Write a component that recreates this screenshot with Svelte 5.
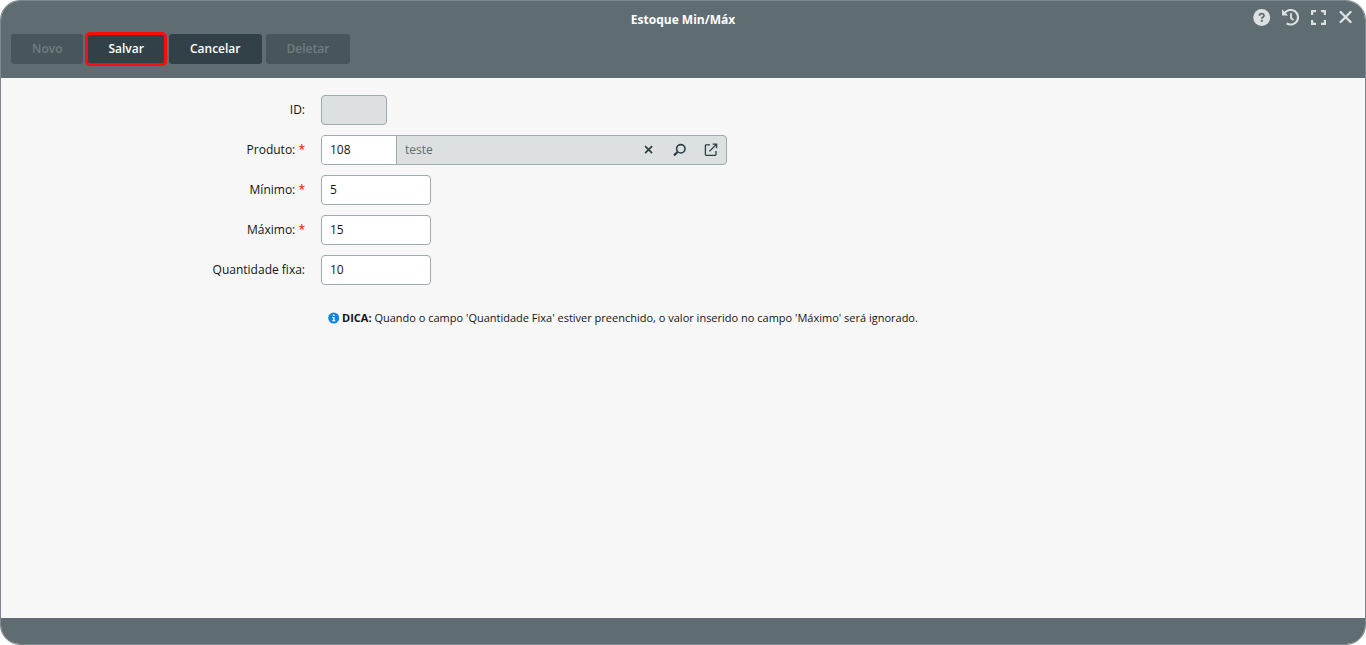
<script>
	let id = '';
	let product = { code: '108', name: 'teste' };
	let minimum = '5';
	let maximum = '15';
	let fixedAmount = '10';

	function clearProduct() {
		product = { code: '', name: '' };
	}
</script>

<main class="window">
	<header>
		<div class="title-bar">
			<h1>Estoque Min/Máx</h1>
			<div class="window-actions">
				<button type="button" aria-label="Ajuda">
					<svg width="18" height="18" viewBox="0 0 18 18">
						<circle cx="8.7" cy="9.5" r="8.5" fill="#dce0e1" />
						<path d="M6.5 7.7C6.5 4.9 11 4.9 11 7.6C11 9.2 8.8 9.2 8.8 10.8" fill="none" stroke="#5f6c71" stroke-width="1.8" />
						<rect x="7.8" y="11.8" width="2" height="2" fill="#5f6c71" />
					</svg>
				</button>
				<button type="button" aria-label="Histórico">
					<svg width="18" height="18" viewBox="0 0 18 18" fill="none" stroke="#dce0e1" stroke-width="2.1">
						<path d="M3.6 5.2A7.3 7.3 0 1 1 5.6 15.3" />
						<path d="M1 1.2V7.4H7.2Z" fill="#dce0e1" stroke="none" />
						<path d="M10 5.2V9.8L12.4 12.2" stroke-width="1.9" />
					</svg>
				</button>
				<button type="button" aria-label="Tela cheia">
					<svg width="18" height="18" viewBox="0 0 18 18" fill="none" stroke="#dce0e1" stroke-width="2.2">
						<path d="M3.1 7V3.1H7M12 3.1H15.9V7M15.9 12V15.9H12M7 15.9H3.1V12" />
					</svg>
				</button>
				<button type="button" aria-label="Fechar">
					<svg width="18" height="18" viewBox="0 0 18 18" stroke="#dce0e1" stroke-width="2.4" stroke-linecap="round">
						<path d="M3.6 4L13.6 14M13.6 4L3.6 14" />
					</svg>
				</button>
			</div>
		</div>
		<div class="toolbar">
			<button type="button" disabled>Novo</button>
			<button type="submit" form="stock-form" class="highlight">Salvar</button>
			<button type="button">Cancelar</button>
			<button type="button" disabled>Deletar</button>
		</div>
	</header>

	<form id="stock-form" on:submit|preventDefault>
		<div class="row">
			<label for="id">ID:</label>
			<input id="id" class="small" bind:value={id} disabled />
		</div>
		<div class="row">
			<label for="product">Produto: <span class="required">*</span></label>
			<div class="lookup">
				<input id="product" class="code" bind:value={product.code} />
				<input class="name" aria-label="Nome do produto" value={product.name} readonly />
				<div class="lookup-actions">
					<button type="button" aria-label="Limpar" on:click={clearProduct}>
						<svg width="16" height="16" viewBox="0 0 16 16" stroke="#2c3e46" stroke-width="1.7">
							<path d="M4.1 4.1L11.1 11.1M11.1 4.1L4.1 11.1" />
						</svg>
					</button>
					<button type="button" aria-label="Pesquisar">
						<svg width="16" height="16" viewBox="0 0 16 16" fill="none" stroke="#2c3e46" stroke-width="1.6">
							<circle cx="8.8" cy="6.8" r="4.2" />
							<path d="M5.6 10L2 13.4" stroke-width="2.2" />
						</svg>
					</button>
					<button type="button" aria-label="Abrir cadastro">
						<svg width="16" height="16" viewBox="0 0 16 16" fill="none" stroke="#2c3e46" stroke-width="1.3">
							<path d="M7 2.8H3.2Q2.4 2.8 2.4 3.6V12.6Q2.4 13.4 3.2 13.4H12.2Q13 13.4 13 12.6V9" />
							<path d="M6.4 9.4L13 2.8M9.6 2.2H13.6V6.2" />
						</svg>
					</button>
				</div>
			</div>
		</div>
		<div class="row">
			<label for="minimum">Mínimo: <span class="required">*</span></label>
			<input id="minimum" bind:value={minimum} />
		</div>
		<div class="row">
			<label for="maximum">Máximo: <span class="required">*</span></label>
			<input id="maximum" bind:value={maximum} />
		</div>
		<div class="row">
			<label for="fixed">Quantidade fixa:</label>
			<input id="fixed" bind:value={fixedAmount} />
		</div>
		<p class="tip">
			<svg width="12" height="12" viewBox="0 0 12 12">
				<circle cx="5.7" cy="6" r="5.5" fill="#0d86e3" />
				<path d="M4.9 2.5H6.5V4H4.9ZM4.3 5H6.5V8.2H7.3V9.2H4.2V8.2H5V6H4.3Z" fill="#fff" />
			</svg>
			<span><strong>DICA:</strong> Quando o campo 'Quantidade Fixa' estiver preenchido, o valor inserido no campo 'Máximo' será ignorado.</span>
		</p>
	</form>

	<footer></footer>
</main>

<style>
	:global(body) {
		background: #fff;
	}
	.window {
		box-sizing: border-box;
		min-height: 100vh;
		display: flex;
		flex-direction: column;
		overflow: hidden;
		border: 1px solid #7b898e;
		border-radius: 20px;
		background: #f7f7f7;
		color: #141414;
		font-family: "Open Sans", "Noto Sans", sans-serif;
		font-size: 12px;
	}
	button, input {
		box-sizing: border-box;
		margin: 0;
		font: inherit;
	}
	svg {
		display: block;
	}
	header {
		padding: 7px 10px 14px;
		background: #5f6c71;
	}
	.title-bar {
		display: grid;
		grid-template-columns: 1fr auto 1fr;
		height: 26px;
	}
	h1 {
		grid-column: 2;
		margin: 0;
		color: #fff;
		font-size: 12px;
		font-weight: 700;
		line-height: 24px;
	}
	.window-actions {
		display: flex;
		align-items: flex-start;
		justify-content: flex-end;
		gap: 10px;
	}
	.window-actions button, .lookup-actions button {
		padding: 0;
		border: 0;
		background: none;
		cursor: pointer;
	}
	.toolbar {
		display: flex;
		gap: 4px;
	}
	.toolbar button {
		height: 30px;
		padding: 0 21px 2px;
		border: 0;
		border-radius: 3px;
		background: #324148;
		color: #fff;
		font-weight: 600;
	}
	.toolbar button:disabled {
		background: #48555b;
		color: #707d82;
	}
	.toolbar .highlight {
		outline: 3px solid #fb0d0d;
		outline-offset: -1px;
	}
	form {
		flex: 1;
		display: flex;
		flex-direction: column;
		gap: 10px;
		padding: 17px 16px;
	}
	.row {
		display: flex;
		align-items: center;
		gap: 16px;
	}
	label {
		width: 288px;
		padding-bottom: 2px;
		text-align: right;
	}
	.required {
		color: #f00;
	}
	input {
		width: 110px;
		height: 30px;
		padding: 0 8px 2px;
		border: 1px solid #9eaaae;
		border-radius: 4px;
		background: #fff;
		color: #141414;
	}
	input.small {
		width: 66px;
	}
	input:disabled {
		background: #dce0e1;
	}
	.lookup {
		box-sizing: border-box;
		display: flex;
		width: 406px;
		height: 30px;
		overflow: hidden;
		border: 1px solid #9eaaae;
		border-radius: 4px;
		background: #dce0e1;
	}
	.lookup input {
		height: 28px;
		border: 0;
		border-radius: 0;
	}
	.lookup .code {
		width: 75px;
		border-right: 1px solid #9eaaae;
	}
	.lookup .name {
		flex: 1;
		min-width: 0;
		background: none;
		color: #5f6c71;
	}
	.lookup-actions {
		display: flex;
		align-items: center;
		gap: 15px;
		padding-right: 7px;
	}
	.tip {
		display: flex;
		align-items: center;
		gap: 2px;
		margin: 14px 0 0 311px;
		font-size: 11px;
		line-height: 18px;
	}
	footer {
		height: 26px;
		background: #5f6c71;
	}
</style>
